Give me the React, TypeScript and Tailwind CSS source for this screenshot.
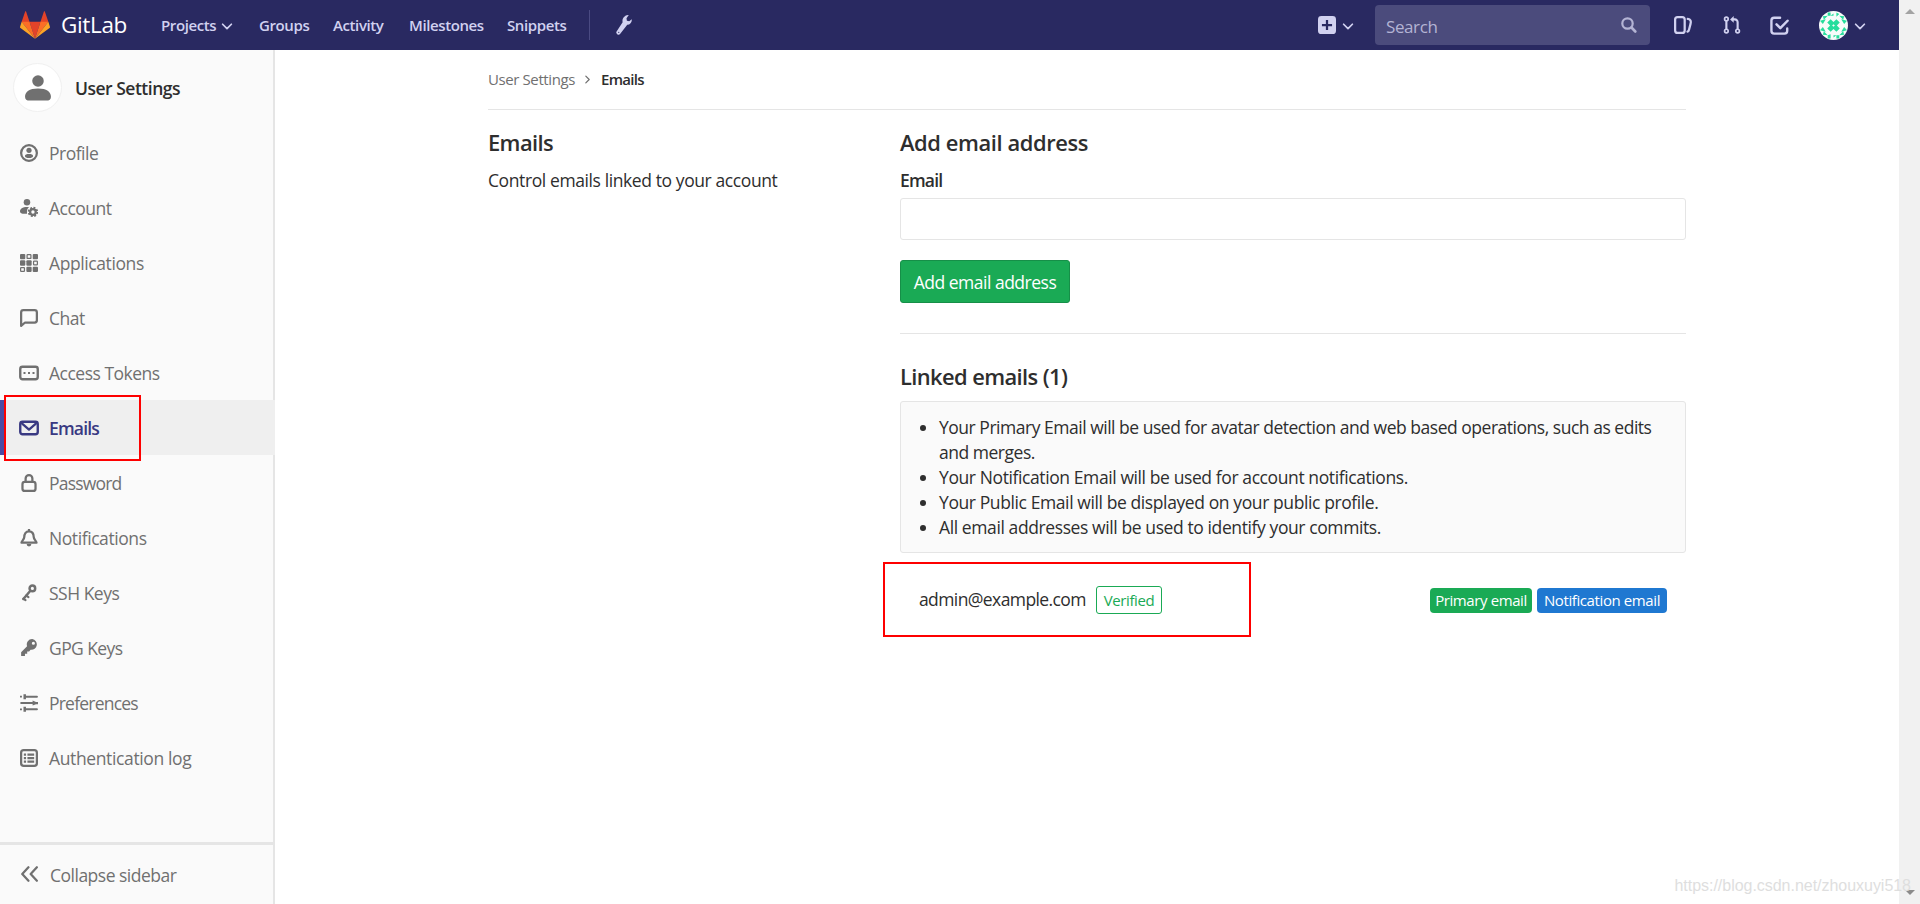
import React from "react";

type IconProps = { className?: string; children?: React.ReactNode };

const Icon = ({ className = "size-[18px]", children }: IconProps) => (
  <svg viewBox="0 0 16 16" fill="currentColor" fillRule="evenodd" className={`shrink-0 ${className}`}>
    {children}
  </svg>
);

const Line = ({ d, w = 2 }: { d: string; w?: number }) => (
  <path d={d} fill="none" stroke="currentColor" strokeWidth={w} strokeLinecap="round" strokeLinejoin="round" />
);

const Chevron = ({ className }: IconProps) => (
  <Icon className={className}>
    <Line d="M3 6 8 11 13 6" />
  </Icon>
);

const navItems = [
  {
    label: "Profile",
    icon: (
      <>
        <circle cx="8" cy="8" r="7" fill="none" stroke="currentColor" strokeWidth="2" />
        <circle cx="8" cy="5.6" r="2.3" />
        <path d="M4.4 10.6C4.4 9.3 5.9 8.9 8 8.9s3.6.4 3.6 1.7-1.5 1.8-3.6 1.8-3.6-.5-3.6-1.8z" />
      </>
    ),
  },
  {
    label: "Account",
    icon: (
      <>
        <circle cx="6.2" cy="2.9" r="2.9" />
        <path d="M6.5 7C2 7 0 8.8 0 11c0 1.6 1.5 2 4 2h2.3c-.3-2.3-.1-4.3 1.7-6z" />
        <circle cx="11.5" cy="11.5" r="2.5" fill="none" stroke="currentColor" strokeWidth="2" />
        <circle cx="11.5" cy="11.5" r="3.8" fill="none" stroke="currentColor" strokeWidth="1.6" strokeDasharray="1.7 1.284" />
      </>
    ),
  },
  {
    label: "Applications",
    tracking: "tracking-[-0.4px]",
    icon: (
      <>
        <g>
          <rect x="0" y="0" width="4.7" height="4.7" rx=".9" />
          <rect x="11.3" y="0" width="4.7" height="4.7" rx=".9" />
          <rect x="0" y="5.65" width="4.7" height="4.7" rx=".9" />
          <rect x="5.65" y="5.65" width="4.7" height="4.7" rx=".9" />
          <rect x="5.65" y="11.3" width="4.7" height="4.7" rx=".9" />
          <rect x="11.3" y="11.3" width="4.7" height="4.7" rx=".9" />
        </g>
        <g fill="none" stroke="currentColor" strokeWidth="1.1">
          <rect x="6.3" y=".55" width="3.4" height="3.4" rx=".5" />
          <rect x="12.05" y="6.3" width="3.4" height="3.4" rx=".5" />
          <rect x=".55" y="12.05" width="3.4" height="3.4" rx=".5" />
        </g>
      </>
    ),
  },
  { label: "Chat", icon: <Line d="M1 3a2 2 0 0 1 2-2h10a2 2 0 0 1 2 2v7a2 2 0 0 1-2 2H4.5L1 15z" /> },
  {
    label: "Access Tokens",
    wide: true,
    icon: (
      <>
        <rect x="1" y="3" width="14" height="10" rx="1.8" fill="none" stroke="currentColor" strokeWidth="1.9" />
        <path d="M3.6 7.2h1.6v1.6H3.6zM7.2 7.2h1.6v1.6H7.2zM10.8 7.2h1.6v1.6h-1.6z" />
      </>
    ),
  },
  {
    label: "Emails",
    wide: true,
    active: true,
    tracking: "tracking-[-0.8px]",
    icon: (
      <>
        <rect x="1" y="3" width="14" height="10" rx="1.8" fill="none" stroke="currentColor" strokeWidth="1.9" />
        <Line d="M2.5 4.5 8 9.3l5.5-4.8" w={1.8} />
      </>
    ),
  },
  {
    label: "Password",
    tracking: "tracking-[-0.8px]",
    icon: (
      <>
        <rect x="2.2" y="7" width="11.6" height="8" rx="2" fill="none" stroke="currentColor" strokeWidth="2" />
        <Line d="M5 7V4a3 3 0 0 1 6 0v3" />
      </>
    ),
  },
  {
    label: "Notifications",
    tracking: "tracking-[-0.42px]",
    icon: (
      <>
        <Line d="M8 2C5 2 3.8 4.5 3.8 7.2 3.8 9.5 1.3 10.5 1.3 12.2h13.4c0-1.7-2.5-2.7-2.5-5C12.2 4.5 11 2 8 2z" />
        <path d="M7 0h2v2H7zM5.9 13.4h4.2a2.1 2.1 0 0 1-4.2 0z" />
      </>
    ),
  },
  {
    label: "SSH Keys",
    icon: (
      <>
        <circle cx="11" cy="3.9" r="2.5" fill="none" stroke="currentColor" strokeWidth="2.2" />
        <Line d="M9.2 6 3 13.3" w={2.2} />
        <Line d="m3 13 1.9 1.4M5.6 10.2l1.9 1.5" w={1.9} />
      </>
    ),
  },
  {
    label: "GPG Keys",
    tracking: "tracking-[-0.58px]",
    icon: (
      <path d="M10.9 0a4.8 4.8 0 0 0-4.6 6.4L1 11.8V15h3.4v-2h2v-2h1.7l1.3-1.5A4.8 4.8 0 1 0 10.9 0zm1 5.2a1.4 1.4 0 1 1 0-2.8 1.4 1.4 0 0 1 0 2.8z" />
    ),
  },
  {
    label: "Preferences",
    tracking: "tracking-[-0.78px]",
    icon: (
      <>
        <Line d="M5 2.4h10M1.1 8h10M5 13.6h10" w={1.9} />
        <path d="M3.1.2h2.2v4.4H3.1zM11.2 5.8l3 1.2H16v2h-1.8l-3 1.2zM3.1 11.4h2.2v4.4H3.1zM0 1.6h1.7v1.6H0zM0 12.8h1.7v1.6H0z" />
      </>
    ),
  },
  {
    label: "Authentication log",
    tracking: "tracking-[-0.37px]",
    icon: (
      <>
        <rect x="1" y="1" width="14" height="14" rx="2.3" fill="none" stroke="currentColor" strokeWidth="2" />
        <path d="M3.4 4h2v2h-2zM3.4 7.1h2v2h-2zM3.4 10.2h2v2h-2zM6.6 4h6v2h-6zM6.6 7.1h6v2h-6zM6.6 10.2h6v2h-6z" />
      </>
    ),
  },
];

const Logo = () => (
  <svg viewBox="0 0 36 36" className="size-[30px] shrink-0">
    <path fill="#e24329" d="m2 14 9.4 9v-9l-4-12c-.2-.6-1.1-.6-1.3 0z" />
    <path fill="#e24329" d="m34 14-9.4 9v-9l4-12c.2-.6 1.1-.6 1.3 0z" />
    <path fill="#e24329" d="M18 34.4 11.4 14h13.2z" />
    <path fill="#fc6d26" d="M18 34.4 11.4 14H2zM18 34.4 24.6 14H34z" />
    <path fill="#fca326" d="M2 14 .1 20.2c-.2.5 0 1.2.5 1.5L18 34.4zM34 14l1.9 6.2c.2.5 0 1.2-.5 1.5L18 34.4z" />
  </svg>
);

const Identicon = () => (
  <svg viewBox="0 0 30 30" className="size-[29px] shrink-0 rounded-full bg-[#f8fbfa]">
    <g fill="#26dd9c">
      <path d="m12 8.500 3 3 3-3 3.500 3.500-3 3 3 3-3.500 3.500-3-3-3 3L8.500 18l3-3-3-3z" />
      <path d="M9 1.500h3V5H9zM18 1.500l3 1.500-3 3zM12 5l3-2.500V5zM9 25l3-1v4.500H9zM18 25h3v3.500h-3zM15 25h3l-3 2.500z" />
      <path d="M4 5.500 9 5 5 9zM26 5.500 21 5l4 4zM4 24.500l5 .5-4-4zM26 24.500l-5 .5 4-4zM1 10l6-1.500-3 5zM29 10l-6-1.500 3 5zM1 20l6 1.500-3-5zM29 20l-6 1.500 3-5z" />
    </g>
    <path fill="#f8fbfa" d="m15 13.600 1.400 1.400-1.400 1.400-1.400-1.400z" />
  </svg>
);

const Header = () => (
  <header className="flex h-[50px] shrink-0 items-center bg-[#292961] pl-5 font-semibold text-[#d1d1f0]">
    <Logo />
    <span className="ml-[11px] w-[100px] text-[22.500px] font-normal tracking-[-0.35px] text-white">GitLab</span>
    <nav className="flex items-center whitespace-nowrap text-[15px] tracking-[-0.4px]">
      <a className="w-[55px]">Projects</a>
      <Chevron className="mt-[2px] mr-[25px] ml-[4px] size-[14px]" />
      <a className="w-[74px]">Groups</a>
      <a className="w-[76px]">Activity</a>
      <a className="w-[98px]">Milestones</a>
      <a className="w-[82px]">Snippets</a>
    </nav>
    <div className="h-[30px] w-px bg-[#4a4a82]" />
    <Icon className="ml-[23px] size-[20px]">
      <path d="M12.6 0 10.8 2.6l.3 1.9 1.9.5L15 3.3c.3 2.4-1.2 4.3-3.6 4.5L5.8 15a1.7 1.7 0 0 1-2.8-2l4.7-7.3C7 2.9 9.5-.2 12.6 0zM4.6 13.300a.5.5 0 1 0 0 1 .5.5 0 0 0 0-1z" />
    </Icon>
    <div className="ml-auto flex items-center">
      <Icon>
        <path d="M3 0h10a3 3 0 0 1 3 3v10a3 3 0 0 1-3 3H3a3 3 0 0 1-3-3V3a3 3 0 0 1 3-3zm4 3.5V7H3.5v2H7v3.5h2V9h3.5V7H9V3.5z" />
      </Icon>
      <Chevron className="mt-[2px] ml-[5px] size-[14px]" />
      <div className="ml-[20px] flex h-[40px] w-[275px] items-center justify-between rounded-[4px] bg-[#4b4b7c] pr-[13px] pl-[11px] text-[17px] font-normal text-[#b4b4d4]">
        <span className="mt-[3px] tracking-[-0.4px]">Search</span>
        <Icon className="size-[16px]">
          <circle cx="6.5" cy="6.5" r="5.2" fill="none" stroke="currentColor" strokeWidth="2.2" />
          <Line d="m10.500 10.500 3.800 4" w={2.6} />
        </Icon>
      </div>
      <Icon className="ml-[24px] size-[18px]">
        <rect x="1" y="1" width="8.5" height="14" rx="2.2" fill="none" stroke="currentColor" strokeWidth="2" />
        <Line d="M12.200 2.600c2.600.4 3.100 1.700 2.500 4.400l-1.300 5c-.2.9-.6 1.600-1.400 1.900" w={2} />
      </Icon>
      <Icon className="ml-[31px] size-[18px]">
        <g fill="none" stroke="currentColor" strokeWidth="1.5">
          <circle cx="3" cy="2.6" r="1.6" />
          <circle cx="3" cy="13.4" r="1.6" />
          <circle cx="13" cy="13.4" r="1.6" />
          <path d="M3 4.2v7.6M13 11.8V5.500a2.500 2.500 0 0 0-2.500-2.500H8.500" strokeWidth="1.9" />
        </g>
        <path d="M9.500 0v6L6.300 3z" />
      </Icon>
      <Icon className="ml-[29px] size-[19px]">
        <Line d="M8.500 1.500H3.500A2.300 2.300 0 0 0 1.200 3.800v8.700a2.300 2.300 0 0 0 2.300 2.300h8.700a2.300 2.300 0 0 0 2.300-2.300V10.500" w={2} />
        <Line d="m5.500 7 3.200 3.200L14.800 4" w={2.1} />
      </Icon>
      <div className="ml-[30px]">
        <Identicon />
      </div>
      <Chevron className="mt-[2px] mr-[32px] ml-[5px] size-[14px]" />
    </div>
  </header>
);

const Sidebar = () => (
  <aside className="relative flex w-[275px] shrink-0 flex-col border-r-2 border-[#e5e5e5] bg-[#fafafa] text-[#707070]">
    <div className="mt-[13px] mb-[13px] flex items-center pl-[13px]">
      <div className="flex size-[49px] items-center justify-center rounded-full border border-[#f0f0f0] bg-white">
        <Icon className="size-[28px]">
          <ellipse cx="8" cy="4" rx="3.3" ry="3.3" />
          <path d="M8 8.3c-5 0-7.4 2-7.4 4.7 0 1.7.9 2.2 2.7 2.2h9.4c1.8 0 2.7-.5 2.7-2.2 0-2.7-2.4-4.7-7.400-4.700z" />
        </Icon>
      </div>
      <span className="mt-[2px] ml-[13px] text-[17.500px] font-semibold tracking-[-0.5px] text-[#2e2e2e]">User Settings</span>
    </div>
    <ul>
      {navItems.map((item) => (
        <li
          key={item.label}
          className={
            item.active
              ? "-mr-[2px] flex h-[55px] items-center border-l-4 border-[#4b4ba3] bg-[#efefef] pl-[15px] font-semibold text-[#393982]"
              : "flex h-[55px] items-center pl-[19px]"
          }
        >
          <span className="flex w-5 justify-center">
            <Icon className={item.wide ? "size-[20px]" : "size-[18px]"}>{item.icon}</Icon>
          </span>
          <span className={`mt-[1px] ml-[10px] text-[17.500px] ${item.tracking ?? "tracking-[-0.5px]"}`}>{item.label}</span>
        </li>
      ))}
    </ul>
    <div className="mt-auto flex h-[62px] items-start border-t-[3px] border-[#e5e5e5] pl-[20px]">
      <Icon className="mt-[20px] size-[18px]">
        <Line d="M7.500 2 2 8l5.500 6M15 2 9.500 8l5.500 6" />
      </Icon>
      <span className="mt-[18px] ml-[12px] text-[17.500px] leading-6 tracking-[-0.5px]">Collapse sidebar</span>
    </div>
    {/* marker around the active entry */}
    <div className="absolute top-[345px] left-[4px] h-[66px] w-[137px] border-2 border-[#fe0000]" />
  </aside>
);

const notes = [
  "Your Primary Email will be used for avatar detection and web based operations, such as edits and merges.",
  "Your Notification Email will be used for account notifications.",
  "Your Public Email will be displayed on your public profile.",
  "All email addresses will be used to identify your commits.",
];

const Content = () => (
  <main className="flex-1 text-[17.500px] leading-[25px] tracking-[-0.4px] text-[#2e2e2e]">
    <div className="ml-[213px] w-[1198px]">
      <div className="flex h-[60px] items-center border-b border-[#e5e5e5] text-[15px]">
        <span className="text-[#707070]">User Settings</span>
        <Icon className="mx-[8px] size-[9px] text-[#707070]">
          <Line d="m5 2 6 6-6 6" w={2.2} />
        </Icon>
        <span className="ml-px font-semibold tracking-[-0.7px]">Emails</span>
      </div>
      <div className="flex">
        <section className="w-[412px] pt-5">
          <h4 className="text-[21.900px] font-semibold tracking-[-0.6px]">Emails</h4>
          <p className="mt-[13px]">Control emails linked to your account</p>
        </section>
        <section className="w-[786px] pt-5">
          <h4 className="text-[21.900px] font-semibold">Add email address</h4>
          <label className="mt-[13px] block font-semibold tracking-[-0.8px]">Email</label>
          <input className="mt-[5px] block h-[42px] w-full rounded-[3px] border border-[#e5e5e5] bg-white px-3" type="text" />
          <button className="mt-[20px] h-[43px] w-[170px] rounded-[3px] border border-[#168f48] bg-[#1aaa55] pt-[2px] tracking-[-0.5px] text-white">
            Add email address
          </button>
          <hr className="mt-[30px] border-[#e5e5e5]" />
          <h4 className="mt-[30px] text-[21.900px] font-semibold tracking-[-0.6px]">Linked emails (1)</h4>
          <div className="mt-[12px] rounded-[3px] border border-[#e5e5e5] bg-[#fafafa] pt-[13px] pr-[15px] pb-[12px] pl-[38px]">
            <ul className="list-disc">
              {notes.map((note) => (
                <li key={note} className="first:tracking-[-0.48px]">
                  {note}
                </li>
              ))}
            </ul>
          </div>
          <div className="relative mt-[9px] flex h-[75px] items-center px-[19px]">
            <div className="absolute top-0 -left-[17px] h-[75px] w-[368px] border-2 border-[#fe0000]" />
            <span className="w-[177px] tracking-[-0.6px]">admin@example.com</span>
            <span className="flex h-[28px] w-[66px] items-center justify-center rounded-[3px] border border-[#1aaa55] pt-px text-[15px] text-[#1aaa55]">
              Verified
            </span>
            <div className="mt-px ml-auto flex gap-[5px] text-[15px] text-white">
              <span className="flex h-[25px] w-[102px] items-center justify-center rounded-[4px] bg-[#1aaa55]">Primary email</span>
              <span className="flex h-[25px] w-[130px] items-center justify-center rounded-[4px] bg-[#1f78d1]">Notification email</span>
            </div>
          </div>
        </section>
      </div>
    </div>
  </main>
);

const App = () => (
  <div className="relative flex h-[904px] w-[1920px] overflow-hidden bg-white font-['Open_Sans','Noto_Sans',sans-serif]">
    <div className="flex flex-1 flex-col">
      <Header />
      <div className="flex flex-1">
        <Sidebar />
        <Content />
      </div>
    </div>
    <div className="flex w-[21px] flex-col items-center justify-between bg-[#f1f1f1] py-[9px]">
      <div className="border-x-[5px] border-b-[5px] border-x-transparent border-b-[#a3a3a3]" />
      <div className="border-x-[5px] border-t-[5px] border-x-transparent border-t-[#8b8b8b]" />
    </div>
    <div className="absolute right-[9px] bottom-[6px] font-['Liberation_Sans',sans-serif] text-[16px] tracking-[-0.03px] text-[#dedede]">
      https://blog.csdn.net/zhouxuyi518
    </div>
  </div>
);

export default App;
